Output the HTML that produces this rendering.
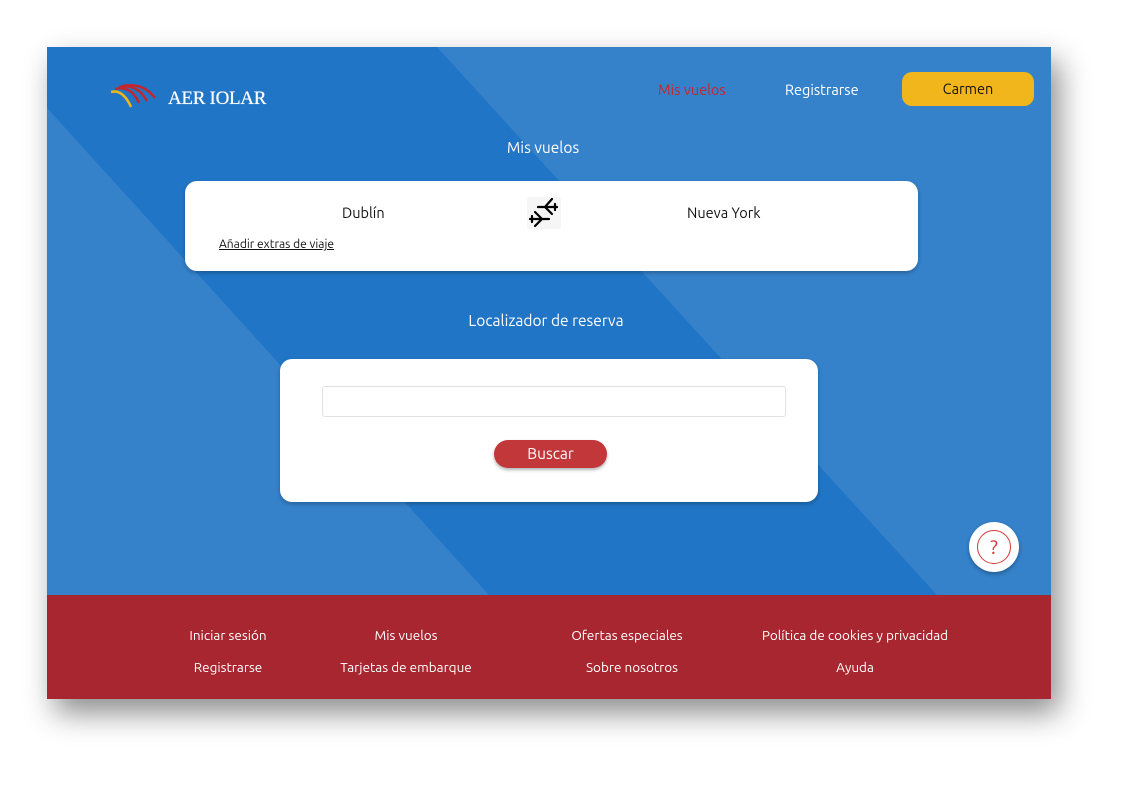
<!DOCTYPE html>
<html><head><meta charset="utf-8"><style>
*{margin:0;padding:0;box-sizing:border-box}
body{width:1147px;height:794px;background:#fff;font-family:"Ubuntu","Liberation Sans",sans-serif;position:relative;overflow:hidden}
.page{position:absolute;left:47px;top:47px;width:1004px;height:652px;box-shadow:8px 14px 28px rgba(0,0,0,.45);overflow:hidden;background:#3582cb}
.abs{position:absolute}
.w{color:#fff}
.card{background:#fff;border-radius:12px;box-shadow:0 2px 4px rgba(0,0,0,.25)}
.foot{position:absolute;left:0;top:548px;width:1004px;height:104px;background:#a8262f;color:#fff;font-size:13.5px}
.foot span{position:absolute;transform:translateX(-50%);white-space:nowrap}
</style></head><body>
<div class="page">
<svg class="abs" style="left:0;top:0" width="1004" height="548"><polygon points="0,61 0,0 390,0 890,548 442,548" fill="#2175c6"/></svg>
<svg class="abs" style="left:62px;top:36px" width="50" height="30" viewBox="0 0 50 30">
<path d="M2 9 Q14 6 22 24" stroke="#f0b41c" stroke-width="2.5" fill="none"/>
<path d="M6 6 Q22 2 30 20" stroke="#c4262e" stroke-width="2.5" fill="none"/>
<path d="M10 4 Q28 0 38 18" stroke="#c4262e" stroke-width="2.5" fill="none"/>
<path d="M14 3 Q34 -1 46 15" stroke="#c4262e" stroke-width="2.5" fill="none"/>
</svg>
<div class="abs w" style="left:121px;top:41px;font-family:'Liberation Serif',serif;font-size:19px;letter-spacing:-0.3px;text-shadow:0 0 0.6px #fff">AER IOLAR</div>
<div class="abs" style="left:611px;top:34px;color:#c4262e;font-size:14.5px">Mis vuelos</div>
<div class="abs w" style="left:738px;top:34px;font-size:14.5px">Registrarse</div>
<div class="abs" style="left:855px;top:25px;width:132px;height:34px;background:#f2b61d;border-radius:10px;text-align:center;line-height:34px;font-size:14.5px;color:#111">Carmen</div>
<div class="abs w" style="left:0;width:992px;text-align:center;top:92px;font-size:15.5px">Mis vuelos</div>
<div class="abs card" style="left:138px;top:134px;width:733px;height:90px">
<div class="abs" style="left:157px;top:23px;font-size:14.5px;color:#111">Dublín</div>
<svg class="abs" style="left:342px;top:16px" width="34" height="32" viewBox="0 0 34 32">
<rect x="0" y="0" width="34" height="32" fill="#f6f6f6"/>
<g stroke="#000" stroke-width="2.2" fill="none" stroke-linecap="round">
<path d="M11 10H30M18 10L25 2M18 10L25 17M28 7V13"/>
<path d="M3 22H22M15 22L8 15M15 22L8 29M5 19V25"/>
</g></svg>
<div class="abs" style="left:502px;top:23px;font-size:14.5px;color:#111">Nueva York</div>
<div class="abs" style="left:34px;top:57px;font-size:12px;color:#111;text-decoration:underline">Añadir extras de viaje</div>
</div>
<div class="abs w" style="left:0;width:998px;text-align:center;top:265px;font-size:15.5px">Localizador de reserva</div>
<div class="abs card" style="left:233px;top:312px;width:538px;height:143px">
<div class="abs" style="left:42px;top:27px;width:464px;height:31px;border:1px solid #e2e2e2;border-radius:3px"></div>
<div class="abs" style="left:214px;top:81px;width:113px;height:28px;background:#c2373a;border-radius:14px;color:#fff;text-align:center;line-height:28px;font-size:15.5px;box-shadow:0 2px 3px rgba(0,0,0,.3)">Buscar</div>
</div>
<div class="abs" style="left:922px;top:475px;width:50px;height:50px;border-radius:50%;background:#fff;box-shadow:0 2px 4px rgba(0,0,0,.3)">
<div class="abs" style="left:8px;top:8px;width:34px;height:34px;border:1.5px solid #d23a3a;border-radius:50%;color:#d23a3a;text-align:center;line-height:31px;font-size:20px">?</div>
</div>
<div class="foot">
<span style="left:181px;top:32px">Iniciar sesión</span>
<span style="left:359px;top:32px">Mis vuelos</span>
<span style="left:580px;top:32px">Ofertas especiales</span>
<span style="left:808px;top:32px">Política de cookies y privacidad</span>
<span style="left:181px;top:64px">Registrarse</span>
<span style="left:359px;top:64px">Tarjetas de embarque</span>
<span style="left:585px;top:64px">Sobre nosotros</span>
<span style="left:808px;top:64px">Ayuda</span>
</div>
</div>
</body></html>
